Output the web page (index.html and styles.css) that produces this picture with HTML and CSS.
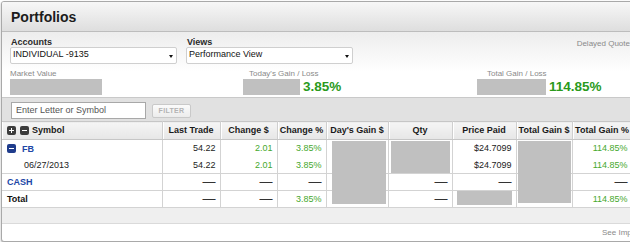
FILE: index.html
```html
<!DOCTYPE html>
<html>
<head>
<meta charset="utf-8">
<title>Portfolios</title>
<link rel="stylesheet" href="styles.css">
</head>
<body>
<div class="portlet">
  <div class="hd"><h1>Portfolios</h1></div>
  <div class="controls">
    <div class="ctl-row">
      <div class="field acc">
        <label>Accounts</label>
        <div class="select"><span>INDIVIDUAL -9135</span><i class="caret"></i></div>
      </div>
      <div class="field views">
        <label>Views</label>
        <div class="select"><span>Performance View</span><i class="caret"></i></div>
      </div>
      <div class="delayed">Delayed Quotes</div>
    </div>
    <div class="summary">
      <div class="sum mv">
        <div class="sum-label">Market Value</div>
        <div class="sum-val"><span class="redact w92"></span></div>
      </div>
      <div class="sum tg">
        <div class="sum-label">Today's Gain / Loss</div>
        <div class="sum-val"><span class="redact w57"></span><span class="big">3.85%</span></div>
      </div>
      <div class="sum ttg">
        <div class="sum-label">Total Gain / Loss</div>
        <div class="sum-val"><span class="redact w69"></span><span class="big">114.85%</span></div>
      </div>
    </div>
  </div>
  <div class="filterbar">
    <div class="input">Enter Letter or Symbol</div>
    <div class="btn">FILTER</div>
  </div>
  <div class="tablewrap">
    <table class="grid">
      <colgroup>
        <col class="c-sym"><col class="c-lt"><col class="c-chd"><col class="c-chp"><col class="c-dg"><col class="c-qty"><col class="c-pp"><col class="c-tgd"><col class="c-tgp">
      </colgroup>
      <thead>
        <tr>
          <th class="sym"><span class="ico dark"><i class="h"></i><i class="v"></i></span><span class="ico dark"><i class="h"></i></span><span>Symbol</span></th>
          <th>Last Trade</th>
          <th>Change $</th>
          <th>Change %</th>
          <th>Day's Gain $</th>
          <th>Qty</th>
          <th>Price Paid</th>
          <th>Total Gain $</th>
          <th>Total Gain %</th>
        </tr>
      </thead>
      <tbody>
        <tr class="nosep">
          <td class="sym"><span class="ico blue"><i class="h"></i></span><span class="tick">FB</span></td>
          <td>54.22</td>
          <td class="g">2.01</td>
          <td class="g">3.85%</td>
          <td></td>
          <td></td>
          <td>$24.7099</td>
          <td></td>
          <td class="g">114.85%</td>
        </tr>
        <tr>
          <td class="sym date">06/27/2013</td>
          <td>54.22</td>
          <td class="g">2.01</td>
          <td class="g">3.85%</td>
          <td></td>
          <td></td>
          <td>$24.7099</td>
          <td></td>
          <td class="g">114.85%</td>
        </tr>
        <tr>
          <td class="sym cash">CASH</td>
          <td class="d">—</td>
          <td class="d">—</td>
          <td class="d">—</td>
          <td></td>
          <td class="d">—</td>
          <td class="d">—</td>
          <td></td>
          <td class="d">—</td>
        </tr>
        <tr>
          <td class="sym total">Total</td>
          <td class="d">—</td>
          <td class="d">—</td>
          <td class="g">3.85%</td>
          <td></td>
          <td class="d">—</td>
          <td></td>
          <td></td>
          <td class="g">114.85%</td>
        </tr>
      </tbody>
    </table>
    <span class="redact ov ov-dg"></span>
    <span class="redact ov ov-qty"></span>
    <span class="redact ov ov-pp"></span>
    <span class="redact ov ov-tg"></span>
  </div>
  <div class="graybar"></div>
  <div class="footer">See Important Information</div>
</div>
</body>
</html>
```

FILE: styles.css
```css
html, body {
  margin: 0;
  padding: 0;
  background: #ffffff;
  overflow: hidden;
}
body {
  font-family: "Liberation Sans", Arial, sans-serif;
  color: #222;
}
.portlet {
  margin: 1px 0 0 1px;
  width: 640px;
  border: 1px solid #a9a9a9;
  border-radius: 3px 0 0 3px;
  box-shadow: 0 1px 2px rgba(0,0,0,0.35);
  background: #fff;
  overflow: hidden;
}
.hd {
  height: 29px;
  border-bottom: 1px solid #bdbdbd;
  background: linear-gradient(#f7f7f7, #dedede);
  display: flex;
  align-items: center;
  padding-left: 9px;
}
.hd h1 {
  margin: 0;
  font-size: 14px;
  font-weight: bold;
  color: #1c1c1c;
  line-height: 16px;
}
.controls {
  height: 66px;
  box-sizing: border-box;
  padding: 5px 8px 0 8px;
  border-bottom: 1px solid #c9c9c9;
  background: linear-gradient(#ededed 0px, #ffffff 40px, #ffffff 66px);
}
.ctl-row {
  display: flex;
  align-items: flex-start;
}
.field label {
  display: block;
  font-size: 9px;
  font-weight: bold;
  color: #2a2a2a;
  line-height: 11px;
  padding-left: 1px;
}
.field.acc { width: 176px; }
.field.views { width: 166px; }
.select {
  margin-top: -1px;
  height: 15px;
  border: 1px solid #cfcfcf;
  border-radius: 2px;
  background: #fff;
  display: flex;
  align-items: flex-start;
  justify-content: space-between;
  padding: 0 3px 0 2px;
  font-size: 9px;
  line-height: 12px;
  color: #111;
}
.field.acc .select { width: 160px; }
.field.views .select { width: 160px; }
.caret {
  width: 0;
  height: 0;
  border-left: 2.5px solid transparent;
  border-right: 2.5px solid transparent;
  border-top: 3px solid #111;
  margin-top: 7px;
}
.delayed {
  margin-left: auto;
  font-size: 8px;
  color: #8a8a8a;
  line-height: 10px;
  margin-top: 2px;
  white-space: nowrap;
}
.summary {
  display: grid;
  grid-template-columns: 233px 234px 1fr;
  margin-top: 5px;
}
.sum-label {
  font-size: 8px;
  line-height: 10px;
  color: #8a8a8a;
  white-space: nowrap;
}
.tg .sum-label { padding-left: 6px; }
.ttg .sum-label { padding-left: 10px; }
.sum-val {
  display: flex;
  align-items: center;
  height: 16px;
}
.redact {
  display: inline-block;
  background: #c0c0c0;
  height: 16px;
}
.w92 { width: 92px; }
.w57 { width: 57px; }
.w69 { width: 69px; }
.big {
  font-size: 13.5px;
  font-weight: bold;
  color: #2a9a1c;
  margin-left: 3px;
  line-height: 16px;
}
.filterbar {
  height: 23px;
  box-sizing: border-box;
  background: #e1e1e1;
  display: flex;
  align-items: flex-start;
  padding: 4px 0 0 9px;
}
.input {
  width: 135px;
  height: 17px;
  box-sizing: border-box;
  border: 1px solid #a8a8a8;
  background: #fff;
  font-size: 9px;
  line-height: 15px;
  color: #555;
  padding-left: 4px;
}
.btn {
  margin-left: 6px;
  margin-top: 2px;
  width: 39px;
  height: 14px;
  box-sizing: border-box;
  border: 1px solid #c9c9c9;
  border-radius: 2px;
  background: linear-gradient(#fbfbfb, #ececec);
  font-size: 7px;
  font-weight: bold;
  letter-spacing: 0.3px;
  color: #b3b3b3;
  text-align: center;
  line-height: 12px;
}
.tablewrap {
  position: relative;
}
.grid {
  border-collapse: collapse;
  table-layout: fixed;
  width: 630px;
  font-size: 9px;
}
.c-sym { width: 160px; }
.c-lt { width: 58px; }
.c-chd { width: 57px; }
.c-chp { width: 49px; }
.c-dg { width: 62px; }
.c-qty { width: 64px; }
.c-pp { width: 64px; }
.c-tgd { width: 56px; }
.c-tgp { width: 60px; }
.grid th {
  height: 17px;
  padding: 0;
  font-weight: bold;
  color: #1a1a1a;
  text-align: center;
  line-height: 17px;
  white-space: nowrap;
  background: linear-gradient(#f5f5f5, #e6e6e6);
  border-top: 1px solid #c6c6c6;
  border-bottom: 1px solid #c6c6c6;
  border-right: 1px solid #cfcfcf;
  box-shadow: inset 1px 0 0 #ffffff;
}
.grid th.sym {
  text-align: left;
  padding-left: 5px;
}
.grid th.sym > span { vertical-align: middle; }
.grid td {
  height: 16px;
  padding: 0 4px 0 4px;
  line-height: 16px;
  text-align: right;
  color: #222;
  white-space: nowrap;
  border-right: 1px solid #d3d3d3;
  border-bottom: 1px solid #d3d3d3;
}
.grid tr.nosep td { border-bottom: none; }
.grid td.sym {
  text-align: left;
  padding-left: 5px;
}
.grid td.g { color: #46a82e; }
.grid td.d { font-size: 13px; color: #333; }
.ico {
  display: inline-block;
  position: relative;
  width: 9px;
  height: 9px;
  border-radius: 2px;
  margin-right: 4px;
  vertical-align: middle;
}
.ico.dark { background: #3c3c3c; }
.ico.dark + .ico.dark { margin-right: 3px; }
.ico.blue { background: #1f3c8c; margin-right: 6px; }
.ico i {
  position: absolute;
  background: #fff;
}
.ico i.h { left: 2px; top: 4px; width: 5px; height: 1px; }
.ico i.v { left: 4px; top: 2px; width: 1px; height: 5px; }
.grid td.sym > * { vertical-align: middle; }
.tick { font-weight: bold; color: #2046a6; }
.grid td.date { padding-left: 22px; color: #222; }
.grid td.cash { font-weight: bold; color: #2046a6; }
.grid td.total { font-weight: bold; color: #111; }
.ov {
  position: absolute;
  display: block;
}
.ov-dg { left: 330px; top: 20px; width: 54px; height: 63px; }
.ov-qty { left: 389px; top: 20px; width: 59px; height: 32px; }
.ov-pp { left: 455px; top: 70px; width: 55px; height: 14px; }
.ov-tg { left: 516px; top: 20px; width: 53px; height: 62px; }
.graybar {
  height: 15px;
  background: #efefef;
  border-bottom: 1px solid #dadada;
}
.footer {
  height: 17px;
  box-sizing: border-box;
  text-align: left;
  padding-left: 600px;
  font-size: 8px;
  line-height: 17px;
  color: #8a8a8a;
  white-space: nowrap;
}
```
